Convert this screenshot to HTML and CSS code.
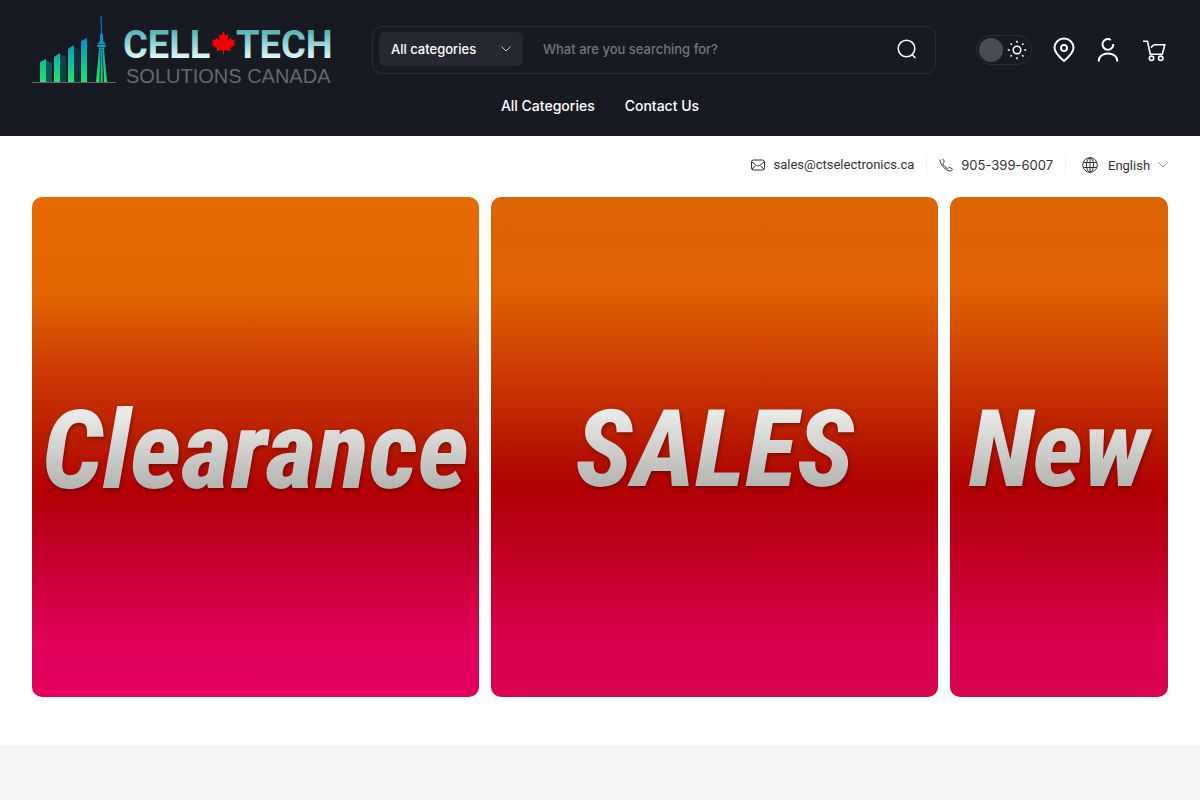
FILE: index.html
```html
<!DOCTYPE html>
<html lang="en">
<head>
  <meta charset="UTF-8">
  <meta name="viewport" content="width=device-width, initial-scale=1.0">
  <title>Cell Tech Solutions Canada</title>
  <link rel="stylesheet" href="styles.css">
</head>
<body>
  <header class="header">
    <div class="header-row">
      <a href="#" class="logo" aria-label="Cell Tech Solutions Canada">
        <svg width="304" height="68" viewBox="0 0 304 68">
          <defs>
            <linearGradient id="bars" gradientUnits="userSpaceOnUse" x1="0" y1="18" x2="0" y2="66">
              <stop offset="0" stop-color="#0d7fe0"/>
              <stop offset="0.5" stop-color="#12b5a5"/>
              <stop offset="1" stop-color="#1ee66a"/>
            </linearGradient>
            <linearGradient id="shade" x1="0" y1="0" x2="1" y2="0">
              <stop offset="0" stop-color="#0d5a58"/>
              <stop offset="1" stop-color="#181a23"/>
            </linearGradient>
            <linearGradient id="name" gradientUnits="userSpaceOnUse" x1="0" y1="15" x2="0" y2="43">
              <stop offset="0" stop-color="#55b3b9"/>
              <stop offset="1" stop-color="#e4fbfa"/>
            </linearGradient>
          </defs>
          <g fill="url(#shade)">
            <path d="M14 44l6 3v19h-6zM28 38l6 3v25h-6zM42 31l6 3v32h-6zM55 22l7 4v40h-7z"/>
          </g>
          <g fill="url(#bars)">
            <path d="M8 46l6-3v23H8zM22 41l6-4v29h-6zM36 33l6-4v37h-6zM49 25l6-3v44h-6z"/>
            <path d="M68.500 0h1l.5 17 1 1v7h-3v-7l1-1zM66 27l2-2h3l2 2 1 3-2 3h-5l-2-3z"/>
            <path d="M67 33h1.500L67.500 66H64zM70.500 33H72l3 33h-3zM68.800 34h1.400l.5 32h-2z"/>
          </g>
          <path d="M65 28.500h9M66 31.500h7" stroke="#181a23" stroke-width=".6"/>
          <path d="M0 66.500h84" stroke="#66676c"/>
          <text class="logo-name" x="91" y="42" fill="url(#name)">CELL</text>
          <path d="M191 15l2.500 4.500 3-1.500-1 6.500 3.500-3 1 2.500 3-.5-1 3.500 1.500 1-5.500 4.500.5 2.500-6.500-1v4.500h-1v-4.500l-6.500 1 .5-2.500-5.500-4.500 1.500-1-1-3.500 3 .5 1-2.500 3.500 3-1-6.500 3 1.500z" fill="#f50000"/>
          <text class="logo-name" x="204" y="42" fill="url(#name)">TECH</text>
          <text class="logo-sub" x="94" y="67">SOLUTIONS CANADA</text>
        </svg>
      </a>

      <form class="search">
        <div class="select-box">
          <select class="search-category" aria-label="Category">
            <option>All categories</option>
          </select>
          <svg class="chevron" width="10" height="6" viewBox="0 0 10 6"><path d="M.5.500l4.500 4.500L9.500.500"/></svg>
        </div>
        <input type="text" class="search-input" placeholder="What are you searching for?" aria-label="Search">
        <button type="submit" class="search-button" aria-label="Search">
          <svg width="20" height="20" viewBox="0 0 20 20"><circle cx="9.500" cy="9.500" r="8.300"/><path d="M15.500 16l3 3"/></svg>
        </button>
      </form>

      <div class="actions">
        <label class="theme-toggle">
          <input type="checkbox" aria-label="Light theme">
          <svg width="20" height="20" viewBox="0 0 20 20">
            <circle cx="10" cy="10" r="3.800"/>
            <path d="M10 .8v2M10 17.200v2M.8 10h2M17.200 10h2M3.500 3.500l1.300 1.300M15.200 15.200l1.300 1.300M3.500 16.500l1.300-1.300M15.200 4.800l1.300-1.300"/>
          </svg>
        </label>
        <a href="#" class="action" aria-label="Store location">
          <svg width="24" height="26" viewBox="0 0 24 26"><path d="M12 24C9 21.500 2.500 16 2.500 10.800a9.500 9.300 0 0 1 19 0C21.500 16 15 21.500 12 24z"/><circle cx="12" cy="11" r="3"/></svg>
        </a>
        <a href="#" class="action" aria-label="Account">
          <svg width="24" height="26" viewBox="0 0 24 26"><path d="M14.800 2.800A5.400 5.400 0 1 0 17.300 7M2.800 24.500v-.7c0-4.500 4-7.300 9.200-7.300s9.200 2.800 9.200 7.300v.7"/></svg>
        </a>
        <a href="#" class="action" aria-label="Cart">
          <svg width="24" height="26" viewBox="0 0 24 26"><path d="M1 4.200h4.500l2.800 13h12l2.500-9.500H13.500c-2.300 0-3.700 1.300-4.300 3"/><circle cx="9.500" cy="21.300" r="2.200"/><circle cx="18.700" cy="21.300" r="2.200"/></svg>
        </a>
      </div>
    </div>

    <nav class="nav">
      <a href="#">All Categories</a>
      <a href="#">Contact Us</a>
    </nav>
  </header>

  <div class="info-bar">
    <a href="#" class="info-item">
      <svg width="14" height="12" viewBox="0 0 14 12"><rect x=".5" y="1" width="13" height="10" rx="2"/><path d="M1 3l4.500 3.500q1.500 1 3 0L13 3M1 10l3.500-3M13 10L9.500 7"/></svg>
      sales@ctselectronics.ca
    </a>
    <a href="#" class="info-item phone">
      <svg width="14" height="14" viewBox="0 0 14 14"><path d="M1 1.500C1.200 7 6.500 12.800 11.500 13c1 0 1.800-.8 1.800-1.800 0-.8-2.800-2-3.400-1.700-.7.300-.7 1.300-1.500 1C6.700 9.800 4.500 7.500 3.900 5.800c-.2-.8.900-.9 1.200-1.500C5.400 3.600 4.200.8 3.400.8"/></svg>
      905-399-6007
    </a>
    <div class="info-item language">
      <svg width="16" height="16" viewBox="0 0 16 16"><circle cx="8" cy="8" r="7.300"/><ellipse cx="8" cy="8" rx="3.500" ry="7.300"/><path d="M1.300 5.500h13.400M1.300 10.500h13.400M8 .7v14.600"/></svg>
      <div class="select-box">
        <select class="language-select" aria-label="Language">
          <option>English</option>
        </select>
        <svg class="chevron" width="10" height="6" viewBox="0 0 10 6"><path d="M.5.500l4.500 4.500L9.500.500"/></svg>
      </div>
    </div>
  </div>

  <main>
    <section class="banners">
      <a href="#" class="banner clearance"><span>Clearance</span></a>
      <a href="#" class="banner"><span>SALES</span></a>
      <a href="#" class="banner"><span>New</span></a>
    </section>
    <section class="featured"></section>
  </main>
</body>
</html>
```
FILE: styles.css
```css
* {
  box-sizing: border-box;
}

body {
  margin: 0;
  min-height: 100vh;
  display: flex;
  flex-direction: column;
  font-family: Inter, sans-serif;
  background-color: #fff;
}

main {
  flex: 1;
  display: flex;
  flex-direction: column;
}

a {
  color: inherit;
  text-decoration: none;
}

svg {
  display: block;
  flex-shrink: 0;
  overflow: visible;
}

select,
input,
button {
  font-family: inherit;
  margin: 0;
}

/* Header */

.header {
  background-color: #181a23;
  color: #fff;
  padding: 16px 32px 0;
}

.header-row {
  display: flex;
  align-items: center;
  padding-right: 2px;
}

.logo {
  margin-right: 36px;
}

.logo-name {
  font-family: Roboto, sans-serif;
  font-size: 38px;
  font-weight: 700;
}

.logo-sub {
  font-family: "Liberation Sans", Arial, sans-serif;
  font-size: 20px;
  fill: #66676e;
}

.search {
  flex: 1;
  display: flex;
  align-items: center;
  height: 48px;
  padding: 0 6px 2px;
  border: 1px solid #2b2d36;
  border-radius: 10px;
}

.select-box {
  display: grid;
  align-items: center;
}

.select-box select,
.select-box .chevron {
  grid-area: 1 / 1;
}

.chevron {
  justify-self: end;
  pointer-events: none;
  fill: none;
  stroke: currentColor;
}

select {
  appearance: none;
  border: none;
  color: inherit;
}

.search-category {
  width: 144px;
  height: 34px;
  padding: 0 12px;
  border-radius: 6px;
  background-color: #262831;
  font-size: 13px;
  font-weight: 500;
}

.search .chevron {
  margin-right: 12px;
  color: #c5c6c9;
}

.search-input {
  flex: 1;
  min-width: 0;
  padding: 0 20px;
  border: none;
  outline: none;
  background: none;
  color: #fff;
  font-size: 13px;
  font-weight: 500;
}

.search-input::placeholder {
  color: #74757b;
}

.search-button {
  padding: 0;
  margin-right: 12px;
  border: none;
  background: none;
  cursor: pointer;
}

.search-button svg,
.theme-toggle svg,
.action svg {
  fill: none;
  stroke: #fff;
  stroke-width: 2;
}

.search-button svg {
  stroke-width: 1.5;
}

.actions {
  display: flex;
  align-items: center;
  gap: 20px;
  margin-left: 40px;
}

.theme-toggle {
  display: flex;
  align-items: center;
  gap: 4px;
  height: 30px;
  padding: 0 4px 0 2px;
  border: 1px solid #2b2d36;
  border-radius: 15px;
  cursor: pointer;
}

.theme-toggle input {
  appearance: none;
  width: 24px;
  height: 24px;
  border-radius: 50%;
  background-color: #4b4c53;
}

.theme-toggle svg {
  stroke-width: 1.5;
}

.action:last-child {
  margin-left: 2px;
}

.action:last-child svg {
  stroke-width: 1.6;
}

.nav {
  display: flex;
  justify-content: center;
  gap: 30px;
  padding: 12px 0 20px;
  font-size: 14px;
  font-weight: 500;
  line-height: 20px;
}

/* Contact and language bar */

.info-bar {
  display: flex;
  justify-content: flex-end;
  padding: 19px 32px 22px;
  font-family: Roboto, sans-serif;
  font-size: 13px;
  line-height: 20px;
  color: #333;
}

.info-item {
  display: flex;
  align-items: center;
  gap: 8px;
  padding: 0 12px;
  border-right: 1px solid #f0f0f0;
}

.info-item svg {
  fill: none;
  stroke: #333;
}

.phone {
  font-family: Inter, sans-serif;
}

.language {
  padding: 0 0 0 16px;
  gap: 10px;
  border-right: none;
}

.language-select {
  width: 60px;
  padding: 0;
  background: none;
  font-size: 13px;
}

.language .chevron {
  stroke: #888;
}

/* Banners */

.banners {
  display: grid;
  grid-template-columns: 447fr 447fr 218fr;
  gap: 12px;
  padding: 0 32px 48px;
}

.banner {
  display: flex;
  align-items: center;
  justify-content: center;
  height: 500px;
  padding-top: 4px;
  border-radius: 10px;
  overflow: hidden;
  background: linear-gradient(#dd6303, #e06204 18%, #c93403 38%, #b81c00 48%, #b00004 58%, #be001c 70%, #d90050 89%, #d9034e);
  font-family: "Roboto Condensed", Roboto, sans-serif;
  font-size: 108px;
  font-weight: 800;
  font-style: italic;
  line-height: 120px;
}

.banner span {
  padding: 0 12px;
  background: linear-gradient(#e9e9e7 20%, #b0b1ad 85%);
  background-clip: text;
  color: transparent;
  filter: drop-shadow(1px 2px 2px rgba(60, 0, 0, 0.5));
}

.clearance {
  padding-top: 8px;
  background: linear-gradient(#e66b02, #e26602 19%, #c93403 37%, #b91c00 49%, #b20005 59%, #c4002c 72%, #e2005c 90%, #e3005e);
  font-size: 110px;
}

.featured {
  flex: 1;
  background-color: #f4f5f7;
}
```
